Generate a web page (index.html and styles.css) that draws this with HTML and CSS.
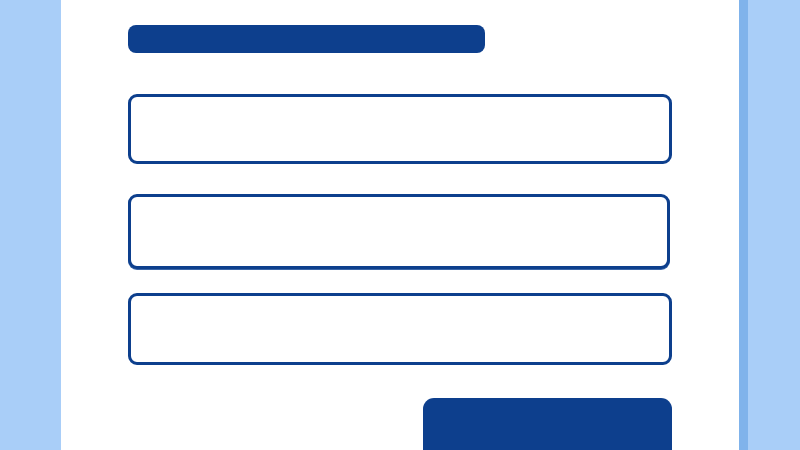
FILE: index.html
```html
<!DOCTYPE html>
<html>
<head>
<meta charset="utf-8">
<link rel="stylesheet" href="styles.css">
</head>
<body>
<div class="page">
  <div class="card">
    <div class="title-bar"></div>
    <div class="field field-1"></div>
    <div class="field field-2"></div>
    <div class="field field-3"></div>
    <div class="actions">
      <div class="button"></div>
    </div>
  </div>
</div>
</body>
</html>
```
FILE: styles.css
```css
html, body {
  margin: 0;
  padding: 0;
  height: 100%;
  overflow: hidden;
}
body {
  background: #a9cef8;
  font-family: "Liberation Sans", Arial, sans-serif;
}
.page {
  display: flex;
  height: 450px;
  padding-left: 61px;
}
.card {
  box-sizing: border-box;
  width: 687px;
  height: 450px;
  background: #ffffff;
  border-right: 9px solid #80b3eb;
  display: flex;
  flex-direction: column;
  padding: 25px 0 0 67px;
}
.title-bar {
  width: 357px;
  height: 28px;
  background: #0d3f8d;
  border-radius: 8px;
  flex-shrink: 0;
}
.field {
  box-sizing: border-box;
  border: 3px solid #0d3f8d;
  border-radius: 9px;
  background: #fff;
  flex-shrink: 0;
}
.field-1 {
  margin-top: 41px;
  width: 544px;
  height: 70px;
}
.field-2 {
  margin-top: 30px;
  width: 542px;
  height: 75px;
  box-shadow: 0 1px 0 #3a66a8;
}
.field-3 {
  margin-top: 24px;
  width: 544px;
  height: 72px;
}
.actions {
  margin-top: 33px;
  width: 544px;
  display: flex;
  justify-content: flex-end;
  flex-shrink: 0;
}
.button {
  width: 249px;
  height: 52px;
  background: #0d3f8d;
  border-radius: 11px 11px 0 0;
}
```
